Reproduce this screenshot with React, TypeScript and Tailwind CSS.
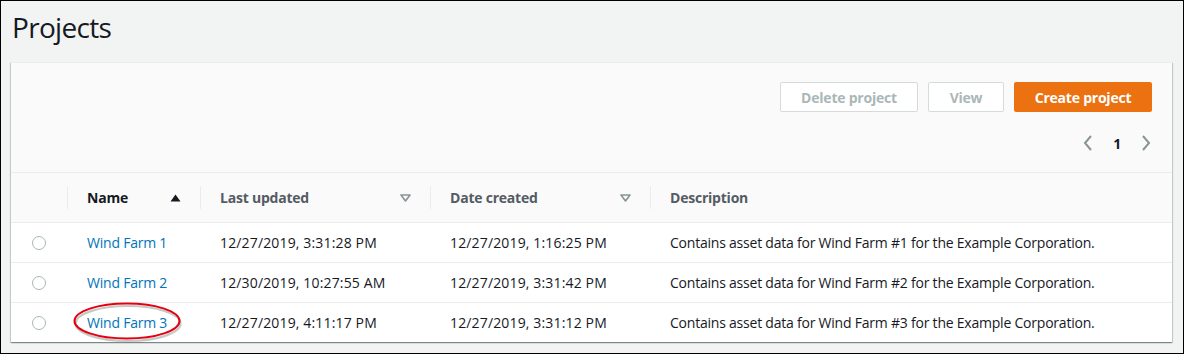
import React from "react";

const rows = [
  { name: "Wind Farm 1", updated: "12/27/2019, 3:31:28 PM", created: "12/27/2019, 1:16:25 PM", desc: "Contains asset data for Wind Farm #1 for the Example Corporation." },
  { name: "Wind Farm 2", updated: "12/30/2019, 10:27:55 AM", created: "12/27/2019, 3:31:42 PM", desc: "Contains asset data for Wind Farm #2 for the Example Corporation." },
  { name: "Wind Farm 3", updated: "12/27/2019, 4:11:17 PM", created: "12/27/2019, 3:31:12 PM", desc: "Contains asset data for Wind Farm #3 for the Example Corporation." },
];

const SortUp = () => (
  <svg width="11" height="8" viewBox="0 0 11 8"><path d="M5.5 0.5 L10.5 7.5 L0.5 7.5 Z" fill="#16191f" /></svg>
);
const SortNone = () => (
  <svg width="11" height="8" viewBox="0 0 11 8"><path d="M1 1 L10 1 L5.5 7 Z" fill="none" stroke="#879596" strokeWidth="1.6" strokeLinejoin="round" /></svg>
);

function HeaderCell({ label, sort, active }: { label: string; sort?: "up" | "none"; active?: boolean }) {
  return (
    <div className="relative flex items-center justify-between pl-[20px] pr-[19px] h-full">
      <div className="absolute left-0 top-[13px] bottom-[13px] w-px bg-[#eaeded]" />
      <span className={`font-bold ${active ? "text-[#16191f]" : "text-[#545b64]"}`}>{label}</span>
      {sort === "up" && <SortUp />}
      {sort === "none" && <SortNone />}
    </div>
  );
}

export default function App() {
  return (
    <div
      className="w-[1184px] h-[354px] border border-black bg-[#f2f3f3] overflow-hidden"
      style={{ fontFamily: '"Open Sans", "Noto Sans", sans-serif' }}
    >
      <div className="pt-[8px] pl-[11px] h-[36px] box-content text-[28px] leading-[36px] tracking-[-0.7px] text-[#16191f]">Projects</div>
      <div className="ml-[10px] mt-[17px] w-[1161px] bg-white border-t border-[#eaeded] shadow-[0_1px_1px_0_rgba(0,28,36,0.3),1px_1px_1px_0_rgba(0,28,36,0.15),-1px_1px_1px_0_rgba(0,28,36,0.15)] text-[14px] tracking-[-0.22px] text-[#16191f]">
        <div className="bg-[#fafafa] h-[109px] pt-[19px] pr-[20px] flex flex-col items-end">
          <div className="flex gap-[10px]">
            <button className="w-[138px] h-[30px] rounded-[2px] border border-[#d5dbdb] bg-white font-bold text-[#aab7b8]">Delete project</button>
            <button className="w-[76px] h-[30px] rounded-[2px] border border-[#d5dbdb] bg-white font-bold text-[#aab7b8]">View</button>
            <button className="w-[138px] h-[30px] rounded-[2px] bg-[#ec7211] font-bold text-white">Create project</button>
          </div>
          <div className="mt-[16px] flex items-center gap-[20px] pr-[1px] h-[30px]">
            <svg width="10" height="16" viewBox="0 0 10 16"><path d="M8 1 L2 8 L8 15" fill="none" stroke="#879596" strokeWidth="2" /></svg>
            <span className="font-bold text-[#16191f] text-[14px]">1</span>
            <svg width="10" height="16" viewBox="0 0 10 16"><path d="M2 1 L8 8 L2 15" fill="none" stroke="#879596" strokeWidth="2" /></svg>
          </div>
        </div>
        <div className="grid grid-cols-[56px_133px_230px_220px_1fr] bg-[#fafafa] h-[50px] border-t border-[#eaeded]">
          <div />
          <HeaderCell label="Name" sort="up" active />
          <HeaderCell label="Last updated" sort="none" />
          <HeaderCell label="Date created" sort="none" />
          <HeaderCell label="Description" />
        </div>
        {rows.map((r, i) => (
          <div key={r.name} className="grid grid-cols-[56px_133px_230px_220px_1fr] h-[40px] items-center border-t border-[#eaeded] bg-white">
            <div className="flex justify-center">
              <span className="block w-[14px] h-[14px] rounded-full border border-[#aab7b8] bg-white" />
            </div>
            <div className="pl-[20px] relative">
              <span className="text-[#0073bb]">{r.name}</span>
              {i === 2 && (
                <svg className="absolute left-[3px] top-[-11px] pointer-events-none" width="116" height="44" viewBox="0 0 116 44">
                  <ellipse cx="57" cy="21" rx="52.5" ry="17.5" fill="none" stroke="rgba(0,0,0,0.22)" strokeWidth="2.2" transform="translate(1,1.5)" />
                  <ellipse cx="57" cy="20" rx="52.5" ry="17.5" fill="none" stroke="#e3000f" strokeWidth="2" />
                </svg>
              )}
            </div>
            <div className="pl-[20px] tracking-[0.15px]">{r.updated}</div>
            <div className="pl-[20px] tracking-[0.15px]">{r.created}</div>
            <div className="pl-[20px]">{r.desc}</div>
          </div>
        ))}
      </div>
    </div>
  );
}
